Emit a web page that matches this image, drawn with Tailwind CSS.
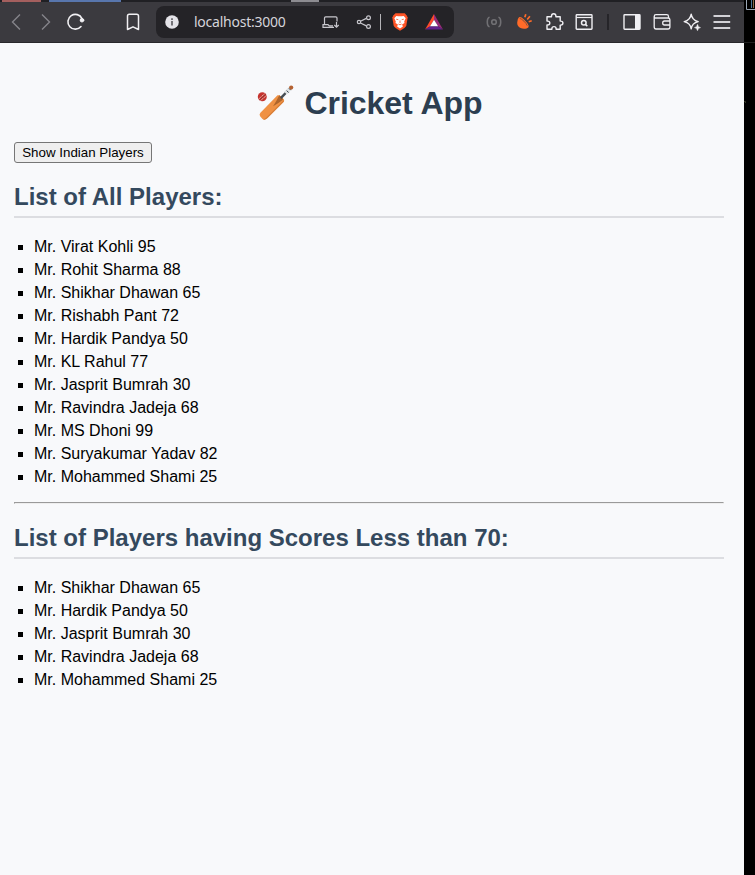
<!DOCTYPE html>
<html lang="en">
<head>
<meta charset="utf-8">
<title>Cricket App</title>
<script src="https://cdn.jsdelivr.net/npm/@tailwindcss/browser@4"></script>
</head>
<body class="h-[875px] w-[755px] overflow-hidden bg-black">
<div class="flex h-full">
<div class="flex w-[744px] flex-col bg-[#f8f9fb]">
  <div class="flex h-[2px] bg-[#202024]">
    <div class="ml-[2px] w-[39px] bg-[#a45f5e]"></div>
    <div class="ml-[8px] w-[72px] bg-[#5876ad]"></div>
    <div class="ml-[170px] w-[28px] bg-[#8d8c91]"></div>
  </div>
  <header class="flex h-[41px] items-center border-b border-[#29282c] bg-[#3b3a3f]">
    <svg class="h-10 w-[30px]" viewBox="0 2 30 40" fill="none" stroke="#85848a" stroke-width="1.4"><path d="M20 14.5 12.5 22 20 29.5"/></svg>
    <svg class="h-10 w-8" viewBox="30 2 32 40" fill="none" stroke="#85848a" stroke-width="1.4"><path d="M42 14.5 49.5 22 42 29.5"/></svg>
    <svg class="h-10 w-[38px]" viewBox="62 2 38 40" fill="none" stroke="#f1f0f3" stroke-width="1.6" stroke-linecap="round"><path d="M82 18.6A7.4 7.4 0 1 0 81 26.5"/><circle cx="82" cy="20.2" r="1.8" fill="#f1f0f3" stroke-width="1"/></svg>
    <svg class="h-10 w-14" viewBox="100 2 56 40" fill="none" stroke="#f1f0f3" stroke-width="1.5" stroke-linejoin="round"><path d="M127.5 16q0-1.8 1.8-1.8h7.4q1.8 0 1.8 1.8V29.5L133 26.8 127.5 29.5Z"/></svg>
    <div class="flex h-8 w-[298px] items-center rounded-lg bg-[#242327]">
      <svg class="h-8 w-[38px]" viewBox="156 6 38 32"><circle cx="172" cy="22" r="6.8" fill="#e4e3e8"/><path d="M171.2 18.3h1.6v1.6h-1.6zM171.2 21h1.6v4.4h-1.6z" fill="#57565b"/></svg>
      <span class="w-[126px] whitespace-nowrap font-['Noto_Sans',sans-serif] text-[14px] leading-8 tracking-[-0.24px] text-[#d5d4da]">localhost:3000</span>
      <svg class="h-8 w-[134px]" viewBox="320 6 134 32" fill="none" stroke="#c8c7cd" stroke-width="1.2">
        <path d="M324.5 24V18q0-1.2 1.2-1.2h10.1q1.2 0 1.2 1.2V21.5M334 27.4H323V24.6h5l1.2 1.2H333"/><path d="M336.5 22v5m-2.2-2 2.2 2.2 2.2-2.2"/>
        <path d="m360.5 21.3 5.8-2.9m-5.8 4.6 5.8 2.9"/><circle cx="359" cy="22" r="1.7"/><circle cx="368.5" cy="17.7" r="1.9"/><circle cx="368.5" cy="26.5" r="1.9"/>
        <path stroke="#b5b4b8" stroke-width="1" d="M380.5 14v16"/>
        <path d="m395.5 13.3h9.2l1.8 2 1.2 2.3-1.4 8.2q-.7 2.1-6.3 5-5.6-2.9-6.3-5l-1.4-8.2 1.2-2.3Z" fill="#ff5426" stroke="none"/>
        <path d="m396.3 16 2 .3h3.4l2-.3 2 2.3-1.5 3.2.3 1.5-2.4 1.6.8 2-2.9 2-2.9-2 .8-2-2.4-1.6.3-1.5-1.5-3.2Z" fill="#fff" stroke="none"/>
        <path d="m396.2 19.2 2.1.5m5.5-.5-2.1.5M400 20.5v2.5m-1.6 1 1.6.8 1.6-.8" stroke="#ff5426" stroke-width=".8"/>
        <path d="M434 14v5.7l-4 6.5-4.9 3.2Z" fill="#ff4a2b" stroke="none"/><path d="m434 14 9 15.4-4.9-3.2-4.1-6.5Z" fill="#992b79" stroke="none"/><path d="M425.1 29.4H443l-4.9-3.2H430Z" fill="#63228d" stroke="none"/><path d="m434 19.7 4.1 6.5H430Z" fill="#fff" stroke="none"/>
      </svg>
    </div>
    <svg class="h-10 w-[290px]" viewBox="454 2 290 40" fill="none" stroke="#f0eff3" stroke-width="1.4" stroke-linejoin="round">
      <g stroke="#717074" stroke-width="1.6"><circle cx="494" cy="22" r="2.3"/><path d="M489.6 17.2Q487.3 17.6 487.3 22t2.3 4.8M498.4 17.2q2.3.4 2.3 4.8t-2.3 4.8"/></g>
      <path d="M519 17.2q1.7-.7 5 2.3t4.7 6.2q.3 2-2.2 2.8-3.3 1-6.5-.7-3-1.8-2.8-5.3.1-3.9 1.8-5.3Z" fill="#ff6b29" stroke="none"/>
      <path d="M519.7 18.4q1.8.4 4.3 2.8t3.3 4.6" stroke="#6f4938" stroke-width=".8"/>
      <path d="m524.8 17.2 1-3m1.4 5.3 2.7-3.3m-1.2 5.6 3-1" stroke="#ff6b29" stroke-width="1.7"/>
      <path d="M547 16.8h4.5v-.9q0-2.2 2.2-2.2t2.2 2.2v.9h4.3v4.3h.6q2.1 0 2.1 2t-2.1 2h-.6v4.2h-4.1v-.7q0-2-2.1-2t-2.1 2v.7H547v-4.4h.8q2 0 2-1.9t-2-1.9h-.8Z"/>
      <rect x="576.2" y="14.7" width="15.8" height="14.6" rx=".7"/><path d="M576.2 17.5H592" stroke-width="1.2"/><circle cx="583.8" cy="22.8" r="2.3" stroke-width="1.5"/><path d="m585.5 24.4 1.8 1.8" stroke-width="1.6"/>
      <path stroke="#242327" stroke-width="1.8" d="M608 14v16"/>
      <rect x="624" y="14.7" width="16" height="14.6" rx=".7"/><path d="M635 15h5v14h-5z" fill="#f0eff3" stroke="none"/>
      <path d="M668.5 18v-1.5q0-1.8-1.8-1.8H656q-1.8 0-1.8 1.7v10.7q0 1.9 1.8 1.9h12q1.9 0 1.9-1.9V19.8q0-1.8-1.8-1.8h-12.2q-1.7 0-1.7-1.5M670 21h-5.5q-1.8 0-1.8 2t1.8 2h5.5" stroke-width="1.3"/>
      <path d="M691.2 14.2q.8 6 7 7.4-6.2 1.4-7 7.3-.8-5.9-7-7.3 6.2-1.4 7-7.4Z"/><path d="M697.5 24.2q.4 2.8 3.1 3.4-2.7.6-3.1 3.2-.4-2.6-3.1-3.2 2.7-.6 3.1-3.4Z" fill="#f0eff3" stroke="#f0eff3" stroke-width=".4"/>
      <path stroke="#d2d1d6" stroke-width="2" d="M713.5 16H730.2M713.5 22H730.2M713.5 28H730.2"/>
    </svg>
  </header>
  <main class="pl-[14px] pr-5 pt-10 font-['Liberation_Sans',Arial,sans-serif] text-base text-black">
    <h1 class="flex h-10 items-center pl-[243px] text-[32px] font-bold leading-10 text-[#2c3e50]">
      <svg class="mr-[9.5px] h-10 w-[38px] shrink-0" viewBox="257 83 38 40" role="img" aria-label="Cricket bat and ball">
        <circle cx="262.3" cy="96.8" r="4.5" fill="#c5342f"/><path d="m258.7 99 6.2-5.5m-4.4 7 6-5" stroke="#f1dfd6" stroke-width=".8" stroke-dasharray="1.5 .6"/><path d="m259.6 99.8 6-5.3" stroke="#7b2d29" stroke-width=".6"/>
        <path d="m277.5 95.3 2-.1 4.3 4q.8.9 0 2.6L267.5 118q-1.8 1.8-3.4 1.8-1.8-.4-4-3.5-1.2-1.8.3-3.6Z" fill="#ef9144"/>
        <path d="m283.8 101.8-16.3 16.2q-1.7 1.7-3.4 1.8l-1-.6q1.6 0 3.3-1.7l17.3-17.3Z" fill="#d67e38"/>
        <path d="m279.3 95.3 3.8 3.6-.5 1.2-4.2 3-5.3 3.2 3.3-5.5Z" fill="#ae652c"/>
        <path d="m280.8 98.2 6.3-6.7" stroke="#454c52" stroke-width="2.5"/><path d="m285.5 93.2 5.1-5.2" stroke="#dfe3e4" stroke-width="3.8"/><path d="m286.7 90.6 2 2m.2-4.3 1.8 1.8" stroke="#34404c" stroke-width="1"/><circle cx="291.2" cy="87.6" r="2.1" fill="#b56231"/>
      </svg><span class="tracking-[-0.04px]">Cricket App</span>
    </h1>
    <button class="mt-[19px] block h-[21px] w-[138px] whitespace-nowrap rounded-[3px] border border-[#767676] bg-[#efefef] text-center text-[13.333px] leading-[19px]">Show Indian Players</button>
    <h2 class="mt-[19px] h-9 border-b-2 border-[#dcdde1] text-2xl font-bold leading-[30px] text-[#34495e]">List of All Players:</h2>
    <ul class="mt-[17px] list-[square] pl-5 leading-[23px]">
      <li>Mr. Virat Kohli 95</li><li>Mr. Rohit Sharma 88</li><li>Mr. Shikhar Dhawan 65</li><li>Mr. Rishabh Pant 72</li><li>Mr. Hardik Pandya 50</li><li>Mr. KL Rahul 77</li><li>Mr. Jasprit Bumrah 30</li><li>Mr. Ravindra Jadeja 68</li><li>Mr. MS Dhoni 99</li><li>Mr. Suryakumar Yadav 82</li><li>Mr. Mohammed Shami 25</li>
    </ul>
    <hr class="mt-[14px] h-[2px] border border-[#9a9a9a] border-b-[#eeeeee] border-r-[#eeeeee]">
    <h2 class="mt-[19px] h-9 border-b-2 border-[#dcdde1] text-2xl font-bold leading-[30px] text-[#34495e]">List of Players having Scores Less than 70:</h2>
    <ul class="mt-[17px] list-[square] pl-5 leading-[23px]">
      <li>Mr. Shikhar Dhawan 65</li><li>Mr. Hardik Pandya 50</li><li>Mr. Jasprit Bumrah 30</li><li>Mr. Ravindra Jadeja 68</li><li>Mr. Mohammed Shami 25</li>
    </ul>
  </main>
</div>
<aside class="w-[11px] bg-black">
  <svg class="h-[110px] w-[11px]" viewBox="744 0 11 110" fill="none"><path d="M746.5 0v9.5h8.5" stroke="#9ba7b6"/><path d="M751.5 0v8" stroke="#507496"/><path d="M753.5 0v8" stroke="#8b6848"/><path d="M744 42.5h11" stroke="#202020"/><path d="M744 101.5h1.5v1.5" stroke="#343725"/></svg>
</aside>
</div>
</body>
</html>
